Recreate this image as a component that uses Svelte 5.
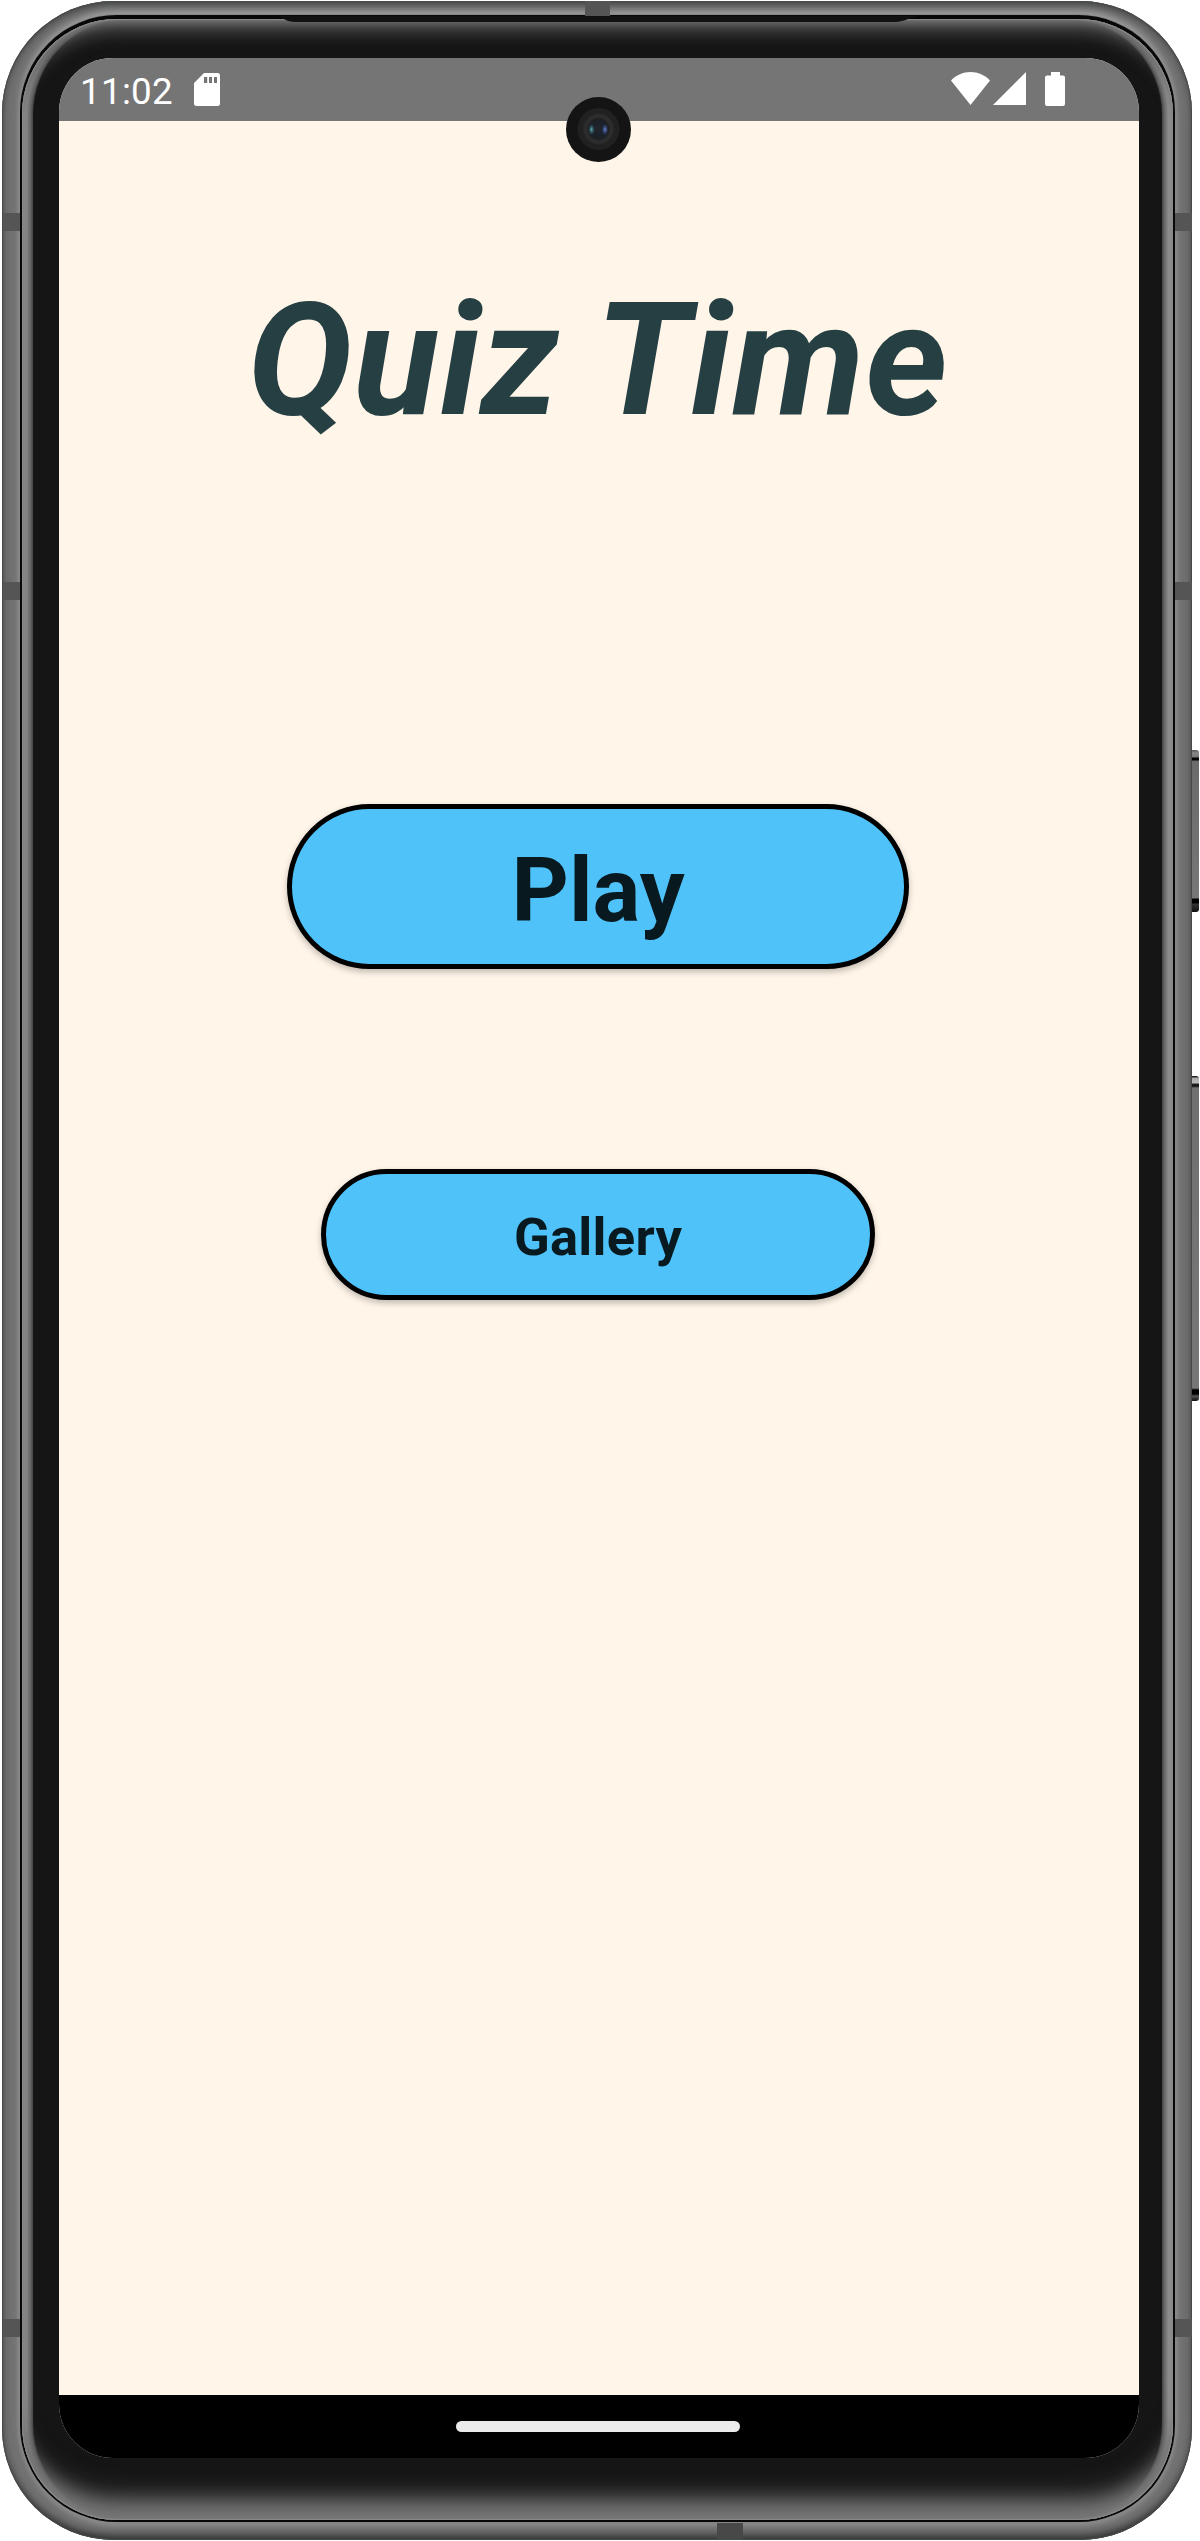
<script>
  const bands = ['left upper', 'left middle', 'left lower', 'right upper', 'right middle', 'right lower', 'top', 'bottom'];
</script>

<div class="device">
  <div class="key power"></div>
  <div class="key volume"></div>
  <div class="metal">
    {#each bands as band}
      <span class="band {band}"></span>
    {/each}
    <div class="seam">
      <div class="glass">
        <div class="screen">
          <header class="status">
            <span class="time">11:02</span>
            <svg class="sd" viewBox="0 0 26 33">
              <path fill-rule="evenodd" d="M10 0H23.500Q26 0 26 2.500V30.500Q26 33 23.500 33H2.500Q0 33 0 30.500V10ZM10 4V10H13.200V4ZM15 4V10H18V4ZM20 4V10H23V4Z" />
            </svg>
            <svg class="wifi" viewBox="0 0 39 33">
              <path d="M19.500 33L0 8.500C5.200 3 12 0 19.500 0S33.800 3 39 8.500Z" />
            </svg>
            <svg class="signal" viewBox="0 0 33 33"><path d="M0 33L33 0V33Z" /></svg>
            <svg class="battery" viewBox="0 0 20 34">
              <path d="M6 0H15V3.500H18Q20 3.500 20 5.500V32Q20 34 18 34H2Q0 34 0 32V5.500Q0 3.500 2 3.500H6Z" />
            </svg>
          </header>
          <main>
            <h1>Quiz Time</h1>
            <button class="play">Play</button>
            <button class="gallery">Gallery</button>
          </main>
          <footer class="nav"><span class="handle"></span></footer>
          <svg class="camera" viewBox="0 0 65 65">
            <defs>
              <radialGradient id="lens">
                <stop offset="0" stop-color="#20242b" />
                <stop offset=".5" stop-color="#1b2029" />
                <stop offset=".62" stop-color="#1d1f22" />
                <stop offset=".8" stop-color="#303030" />
                <stop offset="1" stop-color="#222" />
              </radialGradient>
              <radialGradient id="teal"><stop offset="0" stop-color="#62aaa8" /><stop offset="1" stop-color="#28566a" stop-opacity="0" /></radialGradient>
              <radialGradient id="blue"><stop offset="0" stop-color="#6b87d8" /><stop offset="1" stop-color="#2b3f7c" stop-opacity="0" /></radialGradient>
            </defs>
            <circle cx="32.500" cy="32.500" r="32.500" fill="#141414" />
            <circle cx="32.500" cy="32" r="21" fill="#212121" />
            <circle cx="32.500" cy="32" r="16" fill="url(#lens)" />
            <ellipse cx="25.500" cy="32.500" rx="3.500" ry="6" fill="url(#teal)" />
            <ellipse cx="39" cy="32.500" rx="3.500" ry="6" fill="url(#blue)" />
          </svg>
        </div>
      </div>
      <svg class="speaker" viewBox="0 0 644 7"><path d="M0 0H644Q638 1 634 3T622 6H22Q14 6 10 3T0 0Z" /></svg>
    </div>
  </div>
</div>

<style>
  :global(body) {
    background: #fff;
  }

  .device {
    position: relative;
    box-sizing: border-box;
    width: 1200px;
    height: 2541px;
    padding: 1px 8px 1px 2px;
    overflow: hidden;
    font-family: Roboto, sans-serif;
  }

  /* Metal frame */
  .metal {
    position: relative;
    box-sizing: border-box;
    height: 2539px;
    padding: 14px 17px 18px 18px;
    border-radius: 112px;
    background: #727272;
    box-shadow:
      inset 0 0 1px 1px #484848,
      inset 0 9px 8px -7px #424644,
      inset 0 -11px 9px -7px #303030,
      inset 0 0 8px 1px #4c4c4c;
  }

  .band {
    position: absolute;
    z-index: 1;
    background: #555;
  }
  .left { left: 1px; width: 17px; height: 18px; }
  .right { right: 0; width: 17px; height: 18px; }
  .upper { top: 212px; }
  .middle { top: 581px; }
  .lower { top: 2318px; }
  .top { left: 583px; top: 0; width: 25px; height: 15px; }
  .bottom { left: 715px; bottom: 0; width: 26px; height: 17px; background: #484848; }

  .seam {
    position: relative;
    box-sizing: border-box;
    height: 2507px;
    padding: 4px 2px 2px;
    border-radius: 97px;
    background: #080808;
    box-shadow:
      0 0 1px 1px #858585,
      0 -4px 6px 0 #a0a0a0,
      0 4px 5px 0 #8c8c8c;
  }

  .speaker {
    position: absolute;
    left: 254px;
    top: 1px;
    width: 644px;
    height: 7px;
    fill: #111;
  }

  .glass {
    box-sizing: border-box;
    height: 2501px;
    padding: 39px 33px 62px 37px;
    border-radius: 95px;
    background: #151515;
    box-shadow:
      inset 0 0 1px 1px #8a8a8a,
      inset 0 14px 8px -10px rgba(125, 125, 125, 0.9),
      inset 0 26px 16px -12px rgba(85, 85, 85, 0.8),
      inset 0 -26px 18px -10px rgba(125, 125, 125, 0.9),
      inset 0 -42px 24px -16px rgba(85, 85, 85, 0.8),
      inset 6px 0 2px 0 #8a8a8a,
      inset -6px 0 2px 0 #929292,
      inset 9px 0 2px 0 #707070,
      inset -9px 0 2px 0 #747474,
      inset 11px 0 1px 0 #505050,
      inset -11px 0 1px 0 #505050;
  }

  /* Side keys */
  .key {
    position: absolute;
    right: 1px;
    box-sizing: border-box;
    width: 7px;
    border-radius: 0 3px 3px 0;
  }
  .power {
    top: 750px;
    height: 162px;
    background: linear-gradient(#555, #888 3px, #777 7px, #000 8px, #000 10px, #6b6b6b 11px, #777 148px, #000 149px, #000 153px, #333 154px, #111);
  }
  .volume {
    top: 1076px;
    height: 325px;
    background: linear-gradient(#222 1px, #aaa 2px, #bbb 7px, #222 8px, #111 10px, #707070 12px, #777 312px, #000 314px, #000 318px, #555 320px, #111);
  }

  /* Screen */
  .screen {
    position: relative;
    display: flex;
    flex-direction: column;
    width: 1080px;
    height: 2400px;
    border-radius: 54px;
    overflow: hidden;
    background: #fff5e9;
  }

  .status {
    display: flex;
    align-items: flex-start;
    box-sizing: border-box;
    height: 63px;
    padding: 14px 74px 0 21px;
    background: #757575;
    color: #fff;
  }
  .status svg { flex: none; fill: #fff; }
  .time {
    width: 114px;
    margin-top: -2px;
    font-size: 36.75px;
    letter-spacing: 0.3px;
    line-height: 43px;
  }
  .sd { width: 26px; height: 33px; margin-top: 1px; }
  .wifi { width: 39px; height: 33px; margin-left: auto; }
  .signal { width: 33px; height: 33px; margin-left: 3px; }
  .battery { width: 20px; height: 34px; margin-left: 19px; }

  main {
    display: flex;
    flex: 1;
    flex-direction: column;
    align-items: center;
    padding: 147px 2px 0 0;
  }

  h1 {
    height: 185px;
    margin: 0 0 351px;
    color: #263f43;
    font-size: 157.5px;
    font-style: italic;
    font-weight: 700;
    letter-spacing: 0.85px;
    line-height: 185px;
    white-space: nowrap;
  }

  button {
    box-sizing: border-box;
    border: 5px solid #000;
    border-radius: 90px;
    background: #4fc3f9;
    box-shadow: 0 3px 6px rgba(0, 0, 0, 0.25);
    color: #08191f;
    font-family: inherit;
    font-weight: 700;
  }
  .play {
    width: 622px;
    height: 165px;
    margin-bottom: 200px;
    padding: 8px 0 0;
    font-size: 89.25px;
  }
  .gallery {
    width: 554px;
    height: 131px;
    padding: 5px 0 0;
    font-size: 52.5px;
    letter-spacing: 0.3px;
  }

  .nav {
    display: flex;
    align-items: center;
    justify-content: center;
    height: 63px;
    background: #000;
  }
  .handle {
    width: 284px;
    height: 11px;
    margin-right: 2px;
    border-radius: 6px;
    background: #ebebeb;
  }

  .camera {
    position: absolute;
    left: 507px;
    top: 39px;
    width: 65px;
    height: 65px;
  }
</style>
